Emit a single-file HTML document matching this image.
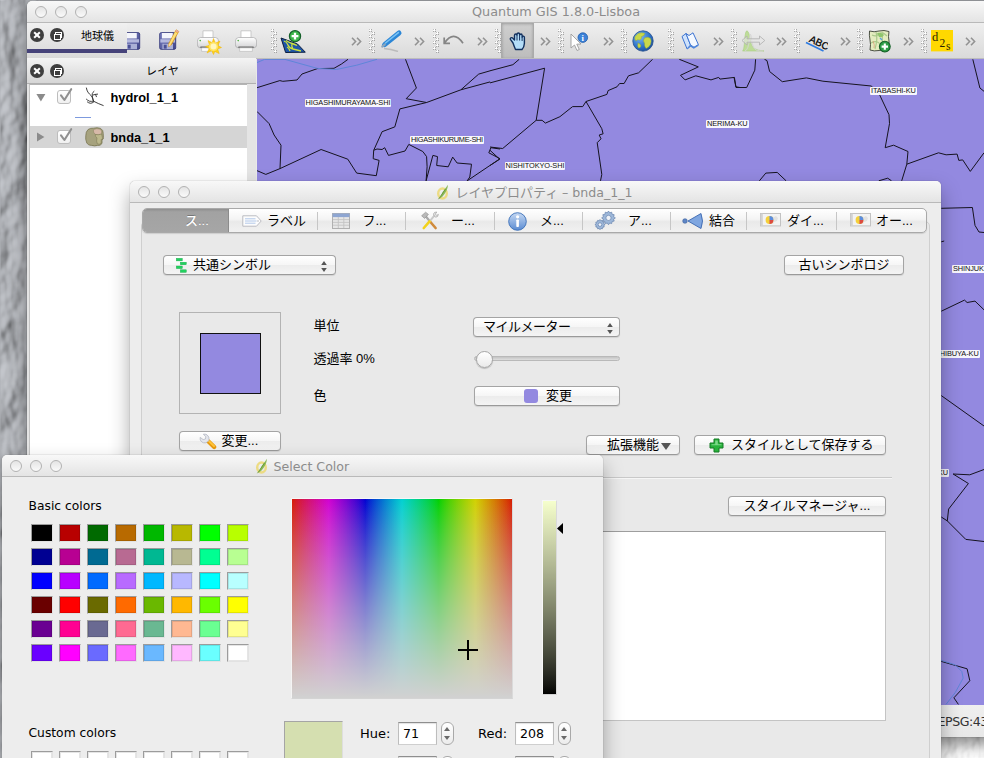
<!DOCTYPE html>
<html lang="ja">
<head>
<meta charset="utf-8">
<title>Quantum GIS 1.8.0-Lisboa</title>
<style>
*{box-sizing:border-box;margin:0;padding:0}
html,body{width:984px;height:758px;overflow:hidden}
body{background:#8e9195;font-family:"Liberation Sans","Noto Sans CJK JP",sans-serif;font-size:13px;color:#000;position:relative}
.abs{position:absolute}
.lg{font-family:"DejaVu Sans","Liberation Sans","Noto Sans CJK JP",sans-serif;font-size:12.6px}
#desk{position:absolute;left:0;top:0;width:984px;height:758px;background:#a3a6aa}
#main{position:absolute;left:27px;top:1px;width:1058px;height:736px;background:#e9e9e9;border-radius:5px 5px 0 0;box-shadow:0 8px 16px rgba(0,0,0,.45),0 0 1px rgba(0,0,0,.7)}
.titlebar{position:absolute;left:0;top:0;right:0;height:22px;border-radius:5px 5px 0 0;background:linear-gradient(#f8f8f8,#e4e4e4);border-bottom:1px solid #b9b9b9;color:#8c8c8c;text-align:center;line-height:22px;font-size:13px;white-space:nowrap}
.lights{position:absolute;left:8px;top:5px;height:12px;line-height:0}
.lights i{display:inline-block;width:12px;height:12px;border-radius:50%;border:1px solid #b2b2b2;background:linear-gradient(#e4e4e4,#fafafa);margin-right:8px;vertical-align:top}
#toolbar{position:absolute;left:0;top:22px;right:0;height:36px;background:linear-gradient(#efefef,#dadada);border-bottom:1px solid #bdbdbd}
#map{position:absolute;left:230px;top:58px;width:828px;height:646px;background:#9389e0;overflow:hidden}
#status{position:absolute;left:0;top:704px;right:0;height:32px;background:linear-gradient(#efefef,#e8e8e8)}
#layers{position:absolute;left:0;top:57px;width:229px;height:680px;background:#e4e4e4}
#layhead{position:absolute;left:0;top:0;width:229px;height:26px;background:linear-gradient(#f4f4f4,#d6d6d6);border-bottom:1px solid #b0b0b0}
#tree{position:absolute;left:2px;top:26px;width:218px;height:651px;background:#fff;border-left:1px solid #c4c4c4;border-top:1px solid #b4b4b4}
.row{position:absolute;left:0;width:217px;height:22px;font-weight:bold;font-size:12.8px;line-height:22px}
.row.sel{background:#d5d5d5}
.cb{position:absolute;left:27px;top:4px;width:14px;height:14px;border:1px solid #bdbdbd;border-radius:3px;background:linear-gradient(#fff,#f0f0f0)}
.cx{position:absolute;width:14px;height:14px;border-radius:50%;background:#3e3e3e}
.cx.x:before,.cx.x:after{content:"";position:absolute;left:6px;top:3px;width:2px;height:8px;background:#fff;transform:rotate(45deg)}
.cx.x:after{transform:rotate(-45deg)}
.cx.f:before{content:"";position:absolute;left:5px;top:3.5px;width:5px;height:4px;border:1px solid #fff}
.cx.f:after{content:"";position:absolute;left:3.5px;top:5.5px;width:5px;height:4px;border:1px solid #fff;background:#3e3e3e}
.dlgwin{position:absolute;background:#ededed;border-radius:5px 5px 0 0;box-shadow:0 10px 20px rgba(0,0,0,.34),0 0 1px rgba(0,0,0,.5)}
.btn{position:absolute;height:20px;border:1px solid #a4a4a4;border-bottom-color:#9a9a9a;border-radius:4px;background:linear-gradient(#ffffff,#f6f6f6 48%,#ececec 52%,#f4f4f4);text-align:center;line-height:18px;font-size:13px;box-shadow:0 1px 1px rgba(0,0,0,.10);white-space:nowrap}
.lbl{position:absolute;font-size:13px;line-height:16px;white-space:nowrap}
.tab{position:absolute;top:0;height:24px;line-height:23px;font-size:13px;white-space:nowrap}
.sw{position:absolute;display:block;width:22px;height:18px;border:1px solid;border-color:#9c9c9c #e2e2e2 #e2e2e2 #9c9c9c;box-shadow:inset 0 0 0 1px rgba(0,0,0,.10)}
.spin{position:absolute;width:39px;height:23px;background:#fff;border:1px solid;border-color:#8e8e8e #bdbdbd #cfcfcf #bdbdbd;line-height:22px;padding-left:4px;box-shadow:inset 0 1px 1px rgba(0,0,0,.12)}
.step{position:absolute;width:13px;height:23px;border:1px solid #a9a9a9;border-radius:6px;background:linear-gradient(#fff,#ececec)}
.step:before,.step:after{content:"";position:absolute;left:2.5px;border:3px solid transparent}
.step:before{top:4px;border-bottom:4.5px solid #6a6a6a;border-top:0}
.step:after{bottom:4px;border-top:4.5px solid #6a6a6a;border-bottom:0}
.chev{position:absolute;top:9px;font-size:15px;line-height:16px;color:#8a8a8a;font-family:"DejaVu Sans",sans-serif;letter-spacing:-2px}
.grip{position:absolute;top:6px;width:7px;height:24px;background:radial-gradient(circle at 1.4px 1.4px,#fff 0 .9px,rgba(125,125,125,.7) 1.5px,transparent 2.1px) 0 0/7px 6px,radial-gradient(circle at 1.4px 1.4px,#fff 0 .9px,rgba(125,125,125,.7) 1.5px,transparent 2.1px) 3px 3px/7px 6px}
.maplbl{position:absolute;font-size:7.4px;line-height:8px;height:8px;background:rgba(255,255,255,.92);color:#111;white-space:nowrap;letter-spacing:-.1px;padding:0 1px;border-radius:1px}
</style>
</head>
<body>
<div id="desk"><svg width="984" height="758" viewBox="0 0 984 758"><filter id="stone" x="0" y="0" width="100%" height="100%"><feTurbulence type="fractalNoise" baseFrequency="0.04 0.028" numOctaves="3" seed="7" result="n"/><feDiffuseLighting in="n" lighting-color="#b9bcc1" surfaceScale="5" diffuseConstant="1.15"><feDistantLight azimuth="200" elevation="48"/></feDiffuseLighting></filter><rect x="0" y="0" width="40" height="758" filter="url(#stone)"/><filter id="stone2" x="0" y="0" width="100%" height="100%"><feTurbulence type="fractalNoise" baseFrequency="0.05 0.04" numOctaves="3" seed="11" result="n"/><feDiffuseLighting in="n" lighting-color="#f4f4f4" surfaceScale="2.5" diffuseConstant="1.3"><feDistantLight azimuth="200" elevation="55"/></feDiffuseLighting></filter><rect x="930" y="700" width="54" height="58" filter="url(#stone2)"/></svg></div>
<div id="main">
  <div class="titlebar"><span class="lights"><i></i><i></i><i></i></span><span class="abs lg" style="left:445px;top:0;line-height:22px;font-size:12.8px">Quantum GIS 1.8.0-Lisboa</span></div>
  <div id="toolbar">
    <div class="abs" style="left:473.5px;top:0;width:33px;height:35px;background:linear-gradient(#cfcfcf,#bdbdbd);border-left:1px solid #aaa;border-right:1px solid #aaa;box-shadow:inset 0 1px 3px rgba(0,0,0,.25)"></div>
    <svg class="abs" style="left:96.4px;top:9.2px" width="17.4" height="18" viewBox="0 0 15.4 18.4" preserveAspectRatio="none"><defs><linearGradient id="fg" x1="0" y1="0" x2="1" y2="1"><stop offset="0" stop-color="#7d83c4"/><stop offset="1" stop-color="#3f4489"/></linearGradient></defs><rect x=".6" y=".6" width="14.2" height="17.2" rx="1.6" fill="url(#fg)" stroke="#35397a" stroke-width=".8"/><rect x="2.6" y="1" width="9.6" height="5.6" fill="#f4f5fb"/><rect x="1.2" y="7.4" width="13" height="3.4" fill="#c3c8e8" opacity=".85"/><rect x="3" y="12" width="9.4" height="5.6" fill="#aab0d6"/><rect x="4.2" y="13" width="2.6" height="4" fill="#4a4f95"/></svg>
    <svg class="abs" style="left:132.3px;top:9.2px" width="17.4" height="18" viewBox="0 0 15.4 18.4" preserveAspectRatio="none"><defs><linearGradient id="fg2" x1="0" y1="0" x2="1" y2="1"><stop offset="0" stop-color="#7d83c4"/><stop offset="1" stop-color="#3f4489"/></linearGradient></defs><rect x=".6" y=".6" width="14.2" height="17.2" rx="1.6" fill="url(#fg2)" stroke="#35397a" stroke-width=".8"/><rect x="2.6" y="1" width="9.6" height="5.6" fill="#f4f5fb"/><rect x="1.2" y="7.4" width="13" height="3.4" fill="#c3c8e8" opacity=".85"/><rect x="3" y="12" width="9.4" height="5.6" fill="#aab0d6"/><rect x="4.2" y="13" width="2.6" height="4" fill="#4a4f95"/></svg>
    <svg class="abs" style="left:138.5px;top:6px" width="14" height="20" viewBox="0 0 14 20"><path d="M10.2 .8 L12.8 2.4 L5.2 16 L2.6 17.6 L2.8 14.4 Z" fill="#f6b92c" stroke="#c98a12" stroke-width=".6"/><path d="M9 2.9 L11.2 4.2 L4.6 15.6 L3.2 14.9Z" fill="#fbe07a"/><path d="M2.8 14.4 L5.2 16 L2.6 17.6Z" fill="#f3d9b0"/><path d="M10.2 .8 L12.8 2.4 L12 3.8 L9.4 2.2Z" fill="#e8a8a0"/></svg>
    <svg class="abs" style="left:170px;top:7px" width="22" height="22" viewBox="0 0 22 22"><defs><linearGradient id="pg" x1="0" y1="0" x2="0" y2="1"><stop offset="0" stop-color="#ffffff"/><stop offset="1" stop-color="#d4d4d6"/></linearGradient></defs><path d="M6 .8 H16 V8 H6Z" fill="#fff" stroke="#b9b9b9" stroke-width=".7"/><path d="M3.5 7.5 H18.5 Q21.4 7.8 21.6 11 V15 Q21.4 17.6 19 17.8 H3 Q.6 17.6 .4 15 V11 Q.6 7.8 3.5 7.5Z" fill="url(#pg)" stroke="#a9a9ab" stroke-width=".7"/><rect x="3.4" y="16.6" width="15.2" height="1.2" fill="#4c4c4c"/><path d="M4.6 17.8 H17.4 V21.4 H4.6Z" fill="#fbfbfb" stroke="#b5b5b5" stroke-width=".6"/><circle cx="3.2" cy="10.6" r=".8" fill="#4cae3e"/></svg>
    <svg class="abs" style="left:177.5px;top:14.5px" width="17" height="17" viewBox="0 0 17 17"><path d="M8.5 .5 L10.4 5.2 L15 3 L12.8 7.6 L16.5 9.5 L12.6 11 L14.2 15.6 L9.8 13.4 L8.5 16.5 L6.6 12.6 L2 15 L4.2 10.6 L.5 8.5 L4.6 7.2 L3 2.6 L7.2 4.8Z" fill="#ffd21a" stroke="#f0b400" stroke-width=".5"/><circle cx="8.5" cy="8.5" r="3" fill="#fffbe0"/><circle cx="8.5" cy="8.5" r="4.6" fill="#fff3a0" opacity=".55"/></svg>
    <svg class="abs" style="left:208.4px;top:7px" width="22" height="22" viewBox="0 0 22 22"><defs><linearGradient id="pg2" x1="0" y1="0" x2="0" y2="1"><stop offset="0" stop-color="#ffffff"/><stop offset="1" stop-color="#d4d4d6"/></linearGradient></defs><path d="M6 .8 H16 V8 H6Z" fill="#fff" stroke="#b9b9b9" stroke-width=".7"/><path d="M3.5 7.5 H18.5 Q21.4 7.8 21.6 11 V15 Q21.4 17.6 19 17.8 H3 Q.6 17.6 .4 15 V11 Q.6 7.8 3.5 7.5Z" fill="url(#pg2)" stroke="#a9a9ab" stroke-width=".7"/><rect x="3.4" y="16.6" width="15.2" height="1.2" fill="#4c4c4c"/><path d="M4.6 17.8 H17.4 V21.4 H4.6Z" fill="#fbfbfb" stroke="#b5b5b5" stroke-width=".6"/><circle cx="3.2" cy="10.6" r=".8" fill="#4cae3e"/></svg>
    <i class="grip" style="left:244px"></i>
    <svg class="abs" style="left:253px;top:6px" width="27" height="25" viewBox="0 0 27 25"><path d="M1 9 L17.5 15 L25.3 23.2 L5.6 23.5Z" fill="#1f56a8" stroke="#0d1f3f" stroke-width="1"/><path d="M4 12 Q7 13 8 16 T13 20 T21 22 M6 11.5 Q10 14 12 14.5 T17 16.5 M7 18 Q9 19 10 22 M12 14.5 Q11 17 13 20" fill="none" stroke="#cfe23a" stroke-width="1.3"/><circle cx="15" cy="7.2" r="5.6" fill="#3cb54a" stroke="#15602a" stroke-width="1.2"/><path d="M15 3.8 V10.6 M11.6 7.2 H18.4" stroke="#fff" stroke-width="2.3"/></svg>
    <svg class="abs" style="left:324px;top:14px" width="11" height="9" viewBox="0 0 11 9"><path d="M1 .8 L4.6 4.5 L1 8.2 M6 .8 L9.6 4.5 L6 8.2" fill="none" stroke="#939393" stroke-width="1.6"/></svg>
    <i class="grip" style="left:342px"></i>
    <svg class="abs" style="left:353px;top:6px" width="23" height="23" viewBox="0 0 23 23"><path d="M4 19.5 Q11 20 18 22.5" stroke="rgba(0,0,0,.16)" stroke-width="1.5" fill="none"/><path d="M4.6 15.6 L19 4" stroke="#2b86d6" stroke-width="5" stroke-linecap="round"/><path d="M5.5 14 L18.4 3.6" stroke="#79c2f4" stroke-width="1.6" stroke-linecap="round"/><path d="M2.4 17.4 L4.6 15.6" stroke="#8aa5bd" stroke-width="2.4" stroke-linecap="round"/></svg>
    <svg class="abs" style="left:386.5px;top:14px" width="11" height="9" viewBox="0 0 11 9"><path d="M1 .8 L4.6 4.5 L1 8.2 M6 .8 L9.6 4.5 L6 8.2" fill="none" stroke="#939393" stroke-width="1.6"/></svg>
    <i class="grip" style="left:405.5px"></i>
    <svg class="abs" style="left:415px;top:10px" width="23" height="13" viewBox="0 0 23 13"><path d="M2.4 10.2 Q11.5 -3.5 21 10.2" fill="none" stroke="#858585" stroke-width="1.7"/><path d="M2.2 4.6 V10.4 H8" fill="none" stroke="#858585" stroke-width="1.7"/></svg>
    <svg class="abs" style="left:450px;top:14px" width="11" height="9" viewBox="0 0 11 9"><path d="M1 .8 L4.6 4.5 L1 8.2 M6 .8 L9.6 4.5 L6 8.2" fill="none" stroke="#939393" stroke-width="1.6"/></svg>
    <i class="grip" style="left:467.5px"></i>
    <svg class="abs" style="left:481px;top:9px" width="19" height="19" viewBox="0 0 19 19"><path d="M5 11 L3 8.2 Q1.6 7 2.8 5.9 Q4 5.2 5 6.4 L6.5 8 V3.4 Q6.6 2 7.8 2 Q9 2 9 3.4 V2.4 Q9.2 1 10.4 1 Q11.6 1 11.6 2.4 V3.2 Q11.8 2 13 2 Q14.1 2.1 14.1 3.4 V5 Q14.4 4 15.4 4.1 Q16.5 4.3 16.4 5.6 V11.5 Q16.2 15 14 17.5 H7.5 Q6 14 5 11Z" fill="#b4ddf8" stroke="#12305e" stroke-width="1.4" stroke-linejoin="round"/><path d="M9 4 V8.5 M11.6 3.6 V8.5 M14.1 5 V9" stroke="#12305e" stroke-width="1"/></svg>
    <svg class="abs" style="left:513px;top:14px" width="11" height="9" viewBox="0 0 11 9"><path d="M1 .8 L4.6 4.5 L1 8.2 M6 .8 L9.6 4.5 L6 8.2" fill="none" stroke="#939393" stroke-width="1.6"/></svg>
    <i class="grip" style="left:530.5px"></i>
    <svg class="abs" style="left:542px;top:8px" width="20" height="21" viewBox="0 0 20 21"><path d="M2 3 L2 17 L5.5 14 L8 19.5 L10.3 18.5 L7.8 13.2 L12 13Z" fill="#fff" stroke="#9c9c9c" stroke-width=".9"/><circle cx="13.8" cy="6.6" r="4.8" fill="#3c82d8" stroke="#1f5cab" stroke-width=".8"/><text x="13.8" y="9.6" font-family="Liberation Serif,serif" font-weight="bold" font-size="8.5" text-anchor="middle" fill="#fff">i</text></svg>
    <svg class="abs" style="left:576px;top:14px" width="11" height="9" viewBox="0 0 11 9"><path d="M1 .8 L4.6 4.5 L1 8.2 M6 .8 L9.6 4.5 L6 8.2" fill="none" stroke="#939393" stroke-width="1.6"/></svg>
    <i class="grip" style="left:593.5px"></i>
    <svg class="abs" style="left:605px;top:7px" width="22" height="22" viewBox="0 0 22 22"><defs><radialGradient id="gl" cx=".35" cy=".3" r=".8"><stop offset="0" stop-color="#7fb9f2"/><stop offset=".6" stop-color="#2f73c9"/><stop offset="1" stop-color="#1b4a94"/></radialGradient></defs><circle cx="11" cy="11" r="10.2" fill="url(#gl)" stroke="#244f8d" stroke-width=".8"/><path d="M6 3.5 Q10 2 13 3.5 Q12 6 9.5 6.5 Q10 9 7.5 10 Q5 9 4 11 Q2 9 3 6.5Z M12.5 8 Q16 6.5 18.5 8.5 Q20 11 18.5 14.5 Q16.5 18 14 18.5 Q12 16 12.5 13 Q10.5 11 12.5 8Z M6 13 Q8.5 13.5 9 16 Q8 18.5 6.5 18 Q5 16 6 13Z" fill="#c9d84b" stroke="#8fa52c" stroke-width=".4"/></svg>
    <i class="grip" style="left:640.5px"></i>
    <svg class="abs" style="left:654px;top:9px" width="19" height="18" viewBox="0 0 19 18"><path d="M1 4.5 L5 1.5 L9.5 13 L6 16.8Z" fill="#cfe2fb" stroke="#3d74d2" stroke-width="1"/><path d="M5 1.5 L8 3.5 L12 .8 L17.4 12.6 L13 15.2 L9.5 13Z" fill="#f3f8ff" stroke="#3d74d2" stroke-width="1"/><path d="M6 16.8 L9.5 13 L13 15.2 L17.4 12.6 L17.6 13.8 L12.8 16.8 L9.6 14.8 L6.4 17.6Z" fill="#4a84dd"/></svg>
    <svg class="abs" style="left:685.5px;top:14px" width="11" height="9" viewBox="0 0 11 9"><path d="M1 .8 L4.6 4.5 L1 8.2 M6 .8 L9.6 4.5 L6 8.2" fill="none" stroke="#939393" stroke-width="1.6"/></svg>
    <i class="grip" style="left:704px"></i>
    <svg class="abs" style="left:714px;top:7px" width="25" height="22" viewBox="0 0 25 22"><path d="M1.5 21 Q3 21 3.6 10 Q4.4 .5 6 .8 Q8 1.5 9 9 Q10 16 13 18.5 Q17 20.6 23 21Z" fill="#bcdc94" stroke="#a5cc7c" stroke-width=".6" opacity=".95"/><path d="M4 21 Q7.5 20 8.6 8 Q9.4 .5 10.4 8 Q11.4 18 15 20 Q18 21 22 21" fill="none" stroke="#d4d4d4" stroke-width=".9"/><path d="M1 10.5 L6 6 V8.8 H18.5 V6 L23.8 10.5 L18.5 15 V12.2 H6 V15Z" fill="#e6e6e6" fill-opacity=".6" stroke="#b4b4b4" stroke-width=".9"/></svg>
    <svg class="abs" style="left:749px;top:14px" width="11" height="9" viewBox="0 0 11 9"><path d="M1 .8 L4.6 4.5 L1 8.2 M6 .8 L9.6 4.5 L6 8.2" fill="none" stroke="#939393" stroke-width="1.6"/></svg>
    <i class="grip" style="left:766.5px"></i>
    <svg class="abs" style="left:778px;top:10px" width="23" height="19" viewBox="0 0 23 19"><text x="3.5" y="8.5" font-family="Liberation Sans,sans-serif" font-size="10" fill="#000" stroke="#000" stroke-width=".25" transform="rotate(25 3.5 8.5)">ABC</text><path d="M1 9.5 L18.5 18" stroke="#2f7be0" stroke-width="1.8"/></svg>
    <svg class="abs" style="left:812.5px;top:14px" width="11" height="9" viewBox="0 0 11 9"><path d="M1 .8 L4.6 4.5 L1 8.2 M6 .8 L9.6 4.5 L6 8.2" fill="none" stroke="#939393" stroke-width="1.6"/></svg>
    <i class="grip" style="left:830px"></i>
    <svg class="abs" style="left:841px;top:6px" width="24" height="25" viewBox="0 0 24 25"><path d="M1.5 2 Q6 3.5 11 2 Q16 .8 21 2.5 Q20 8 21 12 Q21.5 17 20.5 21 Q15 20 11 21.5 Q6 22.5 2 21 Q3 15 2 11 Q1 6 1.5 2Z" fill="#e4ecc0" stroke="#3a3f33" stroke-width=".9"/><path d="M4 6 Q8 8 11 5 T19 7 M3 14 Q9 11 12 15 T20 13 M8 3 Q10 10 7 20 M15 3 Q13 11 16 19" fill="none" stroke="#a9c98a" stroke-width="1.2"/><path d="M9 4 Q13 3 16 6 Q14 9 11 8Z" fill="#8fc46c"/><path d="M12 9 L14 11" stroke="#5aa0e0" stroke-width="1.2"/><path d="M5 12 Q7 16 6 19" stroke="#d9a07a" stroke-width=".8" fill="none"/><circle cx="16.8" cy="17.6" r="5.4" fill="#2f9d46" stroke="#155f27" stroke-width="1.1"/><path d="M16.8 14.4 V20.8 M13.6 17.6 H20" stroke="#fff" stroke-width="2.1"/></svg>
    <svg class="abs" style="left:875.5px;top:14px" width="11" height="9" viewBox="0 0 11 9"><path d="M1 .8 L4.6 4.5 L1 8.2 M6 .8 L9.6 4.5 L6 8.2" fill="none" stroke="#939393" stroke-width="1.6"/></svg>
    <i class="grip" style="left:893.5px"></i>
    <svg class="abs" style="left:903.8px;top:7.2px" width="22.2" height="21.4" viewBox="0 0 22.2 21.4"><rect width="22.2" height="21.4" fill="#ffd800"/><g font-family="Liberation Serif,serif" fill="#2a1e00"><text x=".9" y="11.2" font-size="12.5">d</text><text x="8.6" y="16.8" font-size="11.5">2</text><text x="15" y="20.4" font-size="11.5">s</text></g></svg>
    <svg class="abs" style="left:937.5px;top:14px" width="11" height="9" viewBox="0 0 11 9"><path d="M1 .8 L4.6 4.5 L1 8.2 M6 .8 L9.6 4.5 L6 8.2" fill="none" stroke="#939393" stroke-width="1.6"/></svg>
    <div class="abs" style="left:0;top:0;width:100px;height:30px;background:linear-gradient(#f1f1f1,#dcdcdc)"><span class="cx x" style="left:3px;top:5px"></span><span class="cx f" style="left:23px;top:5px"></span><span class="abs" style="left:54px;top:6px;font-size:11px;line-height:14px">地球儀</span><div class="abs" style="left:0;top:26px;width:100px;height:4px;background:#46437a"></div></div>
  </div>
  <div id="layers">
    <div id="layhead">
      <span class="cx x" style="left:3px;top:6px"></span><span class="cx f" style="left:23px;top:6px"></span>
      <span class="abs" style="left:119px;top:6px;font-size:11px;line-height:14px">レイヤ</span>
    </div>
    <div id="tree">
      <div class="row" style="top:1px"><svg class="abs" style="left:6px;top:8px" width="10" height="8" viewBox="0 0 10 8"><path d="M.4 0 H9.4 L4.9 7.4Z" fill="#8b8b8b"/></svg><span class="cb"></span><svg class="abs" style="left:28px;top:1px" width="16" height="18" viewBox="0 0 16 18"><path d="M3 8.4 L6.4 13 L13.2 2.2" fill="none" stroke="#909090" stroke-width="2.1" stroke-linecap="round" stroke-linejoin="round"/></svg><svg class="abs" style="left:54.5px;top:1px" width="20" height="20" viewBox="0 0 20 20"><path d="M1.4 1 Q1.8 3.4 2.9 5.1 Q4.6 7.4 6.5 9.1 Q8.2 11.4 8.5 14.2 Q13 16.6 18.2 18.5 M8.5 14.2 Q7.4 12 7.5 10.2 Q6.9 8.2 7.3 6.6 Q7.8 5.2 9 4.3 M7.7 8.1 Q10.2 7.2 12.6 7.1 M10.6 7.6 L11.4 9.7 M8.5 14.2 Q6.4 14.6 4.5 14.2 Q2.6 13.4 1.4 12.2 M8.5 15.2 Q7 16.2 5.5 16.3 Q3.6 16 2.4 15" fill="none" stroke="#2a2a2a" stroke-width=".9" stroke-linecap="round"/></svg><span class="abs" style="left:80.5px;top:1px">hydrol_1_1</span></div>
      <div class="abs" style="left:45px;top:32px;width:16px;height:1px;background:#7d9ade"></div>
      <div class="row sel" style="top:41px"><svg class="abs" style="left:7px;top:6px" width="8" height="10" viewBox="0 0 8 10"><path d="M0 .4 V9.6 L7.4 5Z" fill="#8b8b8b"/></svg><span class="cb"></span><svg class="abs" style="left:28px;top:1px" width="16" height="18" viewBox="0 0 16 18"><path d="M3 8.4 L6.4 13 L13.2 2.2" fill="none" stroke="#909090" stroke-width="2.1" stroke-linecap="round" stroke-linejoin="round"/></svg><svg class="abs" style="left:54.5px;top:1px" width="20" height="20" viewBox="0 0 20 20"><path d="M3 2.6 Q5.6 .8 8.6 1.2 Q12 .2 15.6 1.4 Q18.4 3 18.2 6.4 L18.4 10.6 Q18.6 12.4 17 12.8 L17 16.4 Q15.4 19 12.6 18.4 Q9.6 19.4 6.6 18.4 Q3.2 18.6 1.8 16 Q.2 12.4 .8 8.6 Q.8 4.8 3 2.6Z" fill="#a6a27e" stroke="#77734f" stroke-width=".8"/><path d="M8.4 2.6 Q11.6 1 15.4 2.2 Q17.4 4 16.6 7 Q13 8.4 10.2 7.4 Q8 5.6 8.4 2.6Z" fill="#d6b9a8" stroke="#8a8260" stroke-width=".5"/><path d="M10.2 7.4 Q13 8.4 16.6 7 L17.6 11.6 Q16.8 12.4 16.2 12.4 L16.2 16 Q14.6 17.8 12.4 17 Q11 14 12 11 Q10 9.4 10.2 7.4Z" fill="#bcb88c" stroke="#77734f" stroke-width=".5"/></svg><span class="abs" style="left:80.5px;top:1px">bnda_1_1</span></div>
    </div>
  </div>
  <div id="map">
    <svg class="abs" style="left:0;top:0" width="829" height="647" viewBox="0 0 829 647"><path fill="none" stroke="#15131f" stroke-width="1" stroke-linejoin="round" d="M148.5 0.3 L159.4 29 L149.2 39.7 L169.6 43.5 L203.9 30.8 L233.1 22.9 M203.9 30.8 L221.7 15.1 L233.1 11.8 M169.6 43.5 L142.9 49.9 L137.8 67.9 L125.1 72.7 L116.7 91.3 L116.2 99.7 L122.1 101.4 L119.3 116.7 L99.7 114.1 L90.8 100.2 L64.1 90.5 L23 109.6 L8.8 115.4 L-0.1 111.6 M-0.1 52.4 L12.1 64.6 L17.1 76 L24 86.2 L23 109.6 M116.7 91.3 L120 90 L125.1 90.5 L127.7 88.7 L131.5 96.4 L148 92 L151.8 85.4 L165.8 92.5 L169.6 97.6 L170.1 107.8 L169.1 121.8 M169.1 121.8 L175.9 96.4 L180.5 97.6 L179.7 106.5 L191.2 107.8 L195.7 98.1 L200.1 104 L214.5 105.2 L212.8 118 L210.2 121.8 M210.2 121.8 L243 99.7 M243 99.7 L231.8 93.8 L233.9 88.7 L243 90 M0 28.7 L22.8 21.6 L25.8 22.3 L40 21 L45 15 L60.4 9.6 L77 9.3 L84.5 5 L91 0.3 M233 11.8 L255.9 5.7 L262.2 0.3 M233 23.9 L287.6 9.2 L279.2 61.3 L245.7 89.5 L233 88 M233 91.3 L242.7 100.2 L233 106.5 M279.2 61.3 L285.1 61.3 L288.4 64.1 L302.9 57.7 L315.6 47.6 L325.7 47.6 L329 42.5 L349.9 35.4 L351.1 31.6 L360 27.8 L362.6 24.5 L367.1 24.5 L371.5 16.8 L381.6 13.8 L395.6 0.3 M329 42.5 L344.8 69.7 L346.1 74.8 L342.2 76 L344 79.8 L340.2 83.7 L344.8 115.4 L343.5 121.8 M422.3 0.3 L441.3 7.9 L423.5 16.3 L428.1 20.9 L438.8 16.8 L454 20.9 L461.7 18.4 L462.9 20.1 L477.4 18.4 L478.9 27.8 L483 28.5 M477 18.4 L479 28.5 L489.7 28.5 L497.8 11.2 L498.6 0.3 M507.5 0.3 L510 1.6 L512.6 12.5 L525.3 22.7 L549.4 18.9 L565.9 22.2 L614.2 27 L621.8 34.1 L632 55.7 L632.5 64.6 L628.2 88.7 L636.6 86.2 L651 92.5 L649.8 105.2 L681.5 93.8 L689.1 95.8 L700.1 95.1 L701.8 101.4 L705.7 100.9 L713.3 112.4 L727 93.8 M649.8 105.2 L644.7 121.8 M715.8 0.3 L722.9 29 L727 32.3 M502.4 121.8 L508.8 114.1 L520.2 113.4 L529.1 121.8 M621.8 121.8 L630.7 119.2 L634.5 121.8 M684.3 149.3 L715.4 148.5 L718 166.4 L722 173 L727 173.5 M684.3 182.8 L687.2 182 M684.3 252.2 L707.5 241.1 L710.1 243.5 L718 242.1 L727 250.8 M684.3 336.6 L727 367 M727 410.5 L712.8 415.8 L696.1 415 L711.4 424.5 L691.6 450.1 L690.3 461.9 M684.3 458 L690.3 461.9 L708.8 480.4 L727 482.5 M684.3 602.4 L710.1 609.8 L712.8 621.7 L696.9 638.8 L701.4 645.4"/>
<path fill="none" stroke="#5f86d8" stroke-width="1" d="M0 3.6 L7.5 0.4 L28 0.4 L60.4 9.4 L79.4 10.5 L99.7 6.2 L120 0.3 M684.3 601.4 L698.2 605.9 L704.8 612.5 L706.2 619.1 L698.2 633.6 L689 645.4"/></svg>
    <span class="maplbl" style="left:47.5px;top:39.5px;">HIGASHIMURAYAMA-SHI</span>
    <span class="maplbl" style="left:153px;top:77px;"><span style="letter-spacing:-.32px">HIGASHIKURUME-SHI</span></span>
    <span class="maplbl" style="left:247.5px;top:103px;">NISHITOKYO-SHI</span>
    <span class="maplbl" style="left:449px;top:61px;">NERIMA-KU</span>
    <span class="maplbl" style="left:613px;top:27.5px;">ITABASHI-KU</span>
    <span class="maplbl" style="left:695px;top:206px;">SHINJUKU-KU</span>
    <span class="maplbl" style="left:677px;top:290.5px;">SHIBUYA-KU</span>
    <span class="maplbl" style="left:645px;top:410px;">MEGURO-KU</span>
  </div>
  <div id="status"><span class="abs lg" style="left:910.5px;top:8.5px;color:#333;letter-spacing:-.45px">EPSG:4326</span></div>
</div>
<div id="dlg" class="dlgwin" style="left:130px;top:181px;width:811px;height:600px">
  <div class="titlebar" style="line-height:23px"><span class="lights"><i></i><i></i><i></i></span><svg class="abs" style="left:306px;top:3px" width="14" height="16" viewBox="0 0 14 16"><ellipse cx="6.5" cy="9.5" rx="4.3" ry="5" fill="none" stroke="#ecd978" stroke-width="2.4" opacity=".9"/><path d="M3.2 15 Q6 8 12 .8 Q11.5 7 6.5 12.5Z" fill="#7fb24a" opacity=".9"/><path d="M2.5 15.2 L9.5 5" stroke="#5f9433" stroke-width=".8"/></svg><span class="abs" style="left:325.5px;top:0">レイヤプロパティ <span class="lg">– bnda_1_1</span></span></div>
  <div class="abs" style="left:11px;top:40px;width:789px;height:600px;background:#e9e9e9;border:1px solid #cfcfcf;border-radius:5px"></div>
  <div class="abs" style="left:12px;top:27px;width:785px;height:25px;border:1px solid #a9a9a9;border-radius:5px;background:linear-gradient(#ffffff,#f4f4f4 45%,#e9e9e9 55%,#f1f1f1);box-shadow:0 1px 1px rgba(0,0,0,.12);overflow:hidden">
   <div class="tab" style="left:-1px;width:87px;background:linear-gradient(#8f8f8f,#a2a2a2 12%,#a6a6a6);color:#fff;box-shadow:inset 1px 0 0 #858585,inset -1px 0 0 #8c8c8c;font-weight:500;"><span class="abs" style="left:43px;top:0;text-shadow:0 -1px 0 rgba(0,0,0,.3)">ス...</span></div>
   <div class="tab" style="left:86px;width:89px;"><svg class="abs" style="left:13px;top:5px" width="20" height="14" viewBox="0 0 20 14"><path d="M.8 1.8 H14.5 L19.2 7 L14.5 12.2 H.8Z" fill="#fcfcfd" stroke="#b4b6bc" stroke-width=".9"/><path d="M3 4.8 H13.5 M3 7 H14.5 M3 9.2 H13.5" stroke="#a9c2e6" stroke-width=".9"/><circle cx="16" cy="7" r=".8" fill="#b4b6bc"/></svg><span class="abs" style="left:38px;top:0;">ラベル</span></div>
   <div class="tab" style="left:175px;width:88px;"><i class="abs" style="left:-1px;top:3px;width:1px;height:18px;background:#c6c6c6"></i><svg class="abs" style="left:14px;top:3.5px" width="18" height="16" viewBox="0 0 18 16"><rect x=".5" y=".5" width="17" height="15" fill="#e6e6e6" stroke="#b0b0b0"/><rect x=".5" y=".5" width="17" height="3.6" fill="#8ea6d2"/><path d="M1 6.6 H17 M1 9.4 H17 M1 12.2 H17 M6.3 4 V15 M11.8 4 V15" stroke="#c4c4c4" stroke-width=".9"/></svg><span class="abs" style="left:44.5px;top:0;">フ...</span></div>
   <div class="tab" style="left:263px;width:89px;"><i class="abs" style="left:-1px;top:3px;width:1px;height:18px;background:#c6c6c6"></i><svg class="abs" style="left:14px;top:2px" width="19" height="19" viewBox="0 0 19 19"><path d="M5.5 5 L10 10.5" stroke="#a9a9a9" stroke-width="2.2" stroke-linecap="round"/><path d="M10 10.5 L15.6 17" stroke="#cf8a3c" stroke-width="2.6" stroke-linecap="round"/><path d="M1.6 4.8 L5.6 1.2 L8.4 3.4 L4.6 7.4Z" fill="#b9b9b9" stroke="#8a8a8a" stroke-width=".6"/><path d="M14.6 4.4 L9.6 10.4" stroke="#c9c9c9" stroke-width="2" stroke-linecap="round"/><path d="M9.6 10.4 L3.8 17" stroke="#f2d21c" stroke-width="2.6" stroke-linecap="round"/><path d="M13.4 3 Q14 .8 16.8 1 L15.4 3 L16.6 4.4 L18.4 3.4 Q18.2 6 15.8 6.2 Q14 5.6 13.4 3Z" fill="#e2e2e2" stroke="#9a9a9a" stroke-width=".6"/></svg><span class="abs" style="left:45px;top:0;">ー...</span></div>
   <div class="tab" style="left:352px;width:87.5px;"><i class="abs" style="left:-1px;top:3px;width:1px;height:18px;background:#c6c6c6"></i><svg class="abs" style="left:13px;top:2.5px" width="19" height="19" viewBox="0 0 19 19"><defs><linearGradient id="ig" x1="0" y1="0" x2="0" y2="1"><stop offset="0" stop-color="#c6d9f3"/><stop offset="1" stop-color="#5a8bd2"/></linearGradient></defs><circle cx="9.5" cy="9.5" r="8.8" fill="url(#ig)" stroke="#3b6fb8" stroke-width=".9"/><rect x="8.3" y="7.5" width="2.6" height="7.5" rx=".8" fill="#fff"/><circle cx="9.6" cy="4.8" r="1.6" fill="#fff"/></svg><span class="abs" style="left:45px;top:0;">メ...</span></div>
   <div class="tab" style="left:439.5px;width:88.5px;"><i class="abs" style="left:-1px;top:3px;width:1px;height:18px;background:#c6c6c6"></i><svg class="abs" style="left:11.5px;top:1px" width="23" height="21" viewBox="0 0 23 21"><g fill="#9db7d9" stroke="#6582ad" stroke-width=".7"><path d="M14.5 1 l1.2 1.8 2-.6 .4 2.1 2.1.4 -.6 2 1.8 1.2 -1.8 1.2 .6 2 -2.1.4 -.4 2.1 -2-.6 -1.2 1.8 -1.2-1.8 -2 .6 -.4-2.1 -2.1-.4 .6-2 -1.8-1.2 1.8-1.2 -.6-2 2.1-.4 .4-2.1 2 .6Z"/><circle cx="14.5" cy="7.9" r="2.6" fill="#eef2f8"/><path d="M6 9.5 l.9 1.3 1.5-.4 .3 1.5 1.5.3 -.4 1.5 1.3.9 -1.3.9 .4 1.5 -1.5.3 -.3 1.5 -1.5-.4 -.9 1.3 -.9-1.3 -1.5.4 -.3-1.5 -1.5-.3 .4-1.5 -1.3-.9 1.3-.9 -.4-1.5 1.5-.3 .3-1.5 1.5.4Z"/><circle cx="6" cy="14.6" r="1.8" fill="#eef2f8"/></g></svg><span class="abs" style="left:45.5px;top:0;">ア...</span></div>
   <div class="tab" style="left:528px;width:75.5px;"><i class="abs" style="left:-1px;top:3px;width:1px;height:18px;background:#c6c6c6"></i><svg class="abs" style="left:11px;top:3px" width="23" height="18" viewBox="0 0 23 18"><circle cx="3" cy="9" r="2.3" fill="#5f86c6" stroke="#3b5f9c" stroke-width=".6"/><path d="M6 9 L19 1.5 Q22 9 19 16.5Z" fill="#7fa6e0" stroke="#3b68b0" stroke-width=".9"/></svg><span class="abs" style="left:38px;top:0;">結合</span></div>
   <div class="tab" style="left:603.5px;width:90px;"><i class="abs" style="left:-1px;top:3px;width:1px;height:18px;background:#c6c6c6"></i><svg class="abs" style="left:13.5px;top:3.8px" width="21" height="14" viewBox="0 0 21 14"><rect x=".5" y=".5" width="20" height="12.4" fill="#f3f3f3" stroke="#c2c2c2"/><rect x=".6" y=".6" width="2.2" height="12.2" fill="#d2d2d2"/><path d="M11 3 l3 1 2-1 2 2 -1 3 -3 1 -1 2 -3-1Z" fill="#e2e2e2"/><circle cx="9.5" cy="7" r="3.9" fill="#f4d03a"/><path d="M9.5 7 V3.1 A3.9 3.9 0 0 1 13.4 7Z" fill="#5b8de0"/><path d="M9.5 7 H13.4 A3.9 3.9 0 0 1 9.5 10.9Z" fill="#dc4a42"/></svg><span class="abs" style="left:40.5px;top:0;">ダイ...</span></div>
   <div class="tab" style="left:693.5px;width:90.5px;"><i class="abs" style="left:-1px;top:3px;width:1px;height:18px;background:#c6c6c6"></i><svg class="abs" style="left:13.3px;top:3.8px" width="21" height="14" viewBox="0 0 21 14"><rect x=".5" y=".5" width="20" height="12.4" fill="#f3f3f3" stroke="#c2c2c2"/><rect x=".6" y=".6" width="2.2" height="12.2" fill="#d2d2d2"/><path d="M11 3 l3 1 2-1 2 2 -1 3 -3 1 -1 2 -3-1Z" fill="#e2e2e2"/><circle cx="9.5" cy="7" r="3.9" fill="#f4d03a"/><path d="M9.5 7 V3.1 A3.9 3.9 0 0 1 13.4 7Z" fill="#5b8de0"/><path d="M9.5 7 H13.4 A3.9 3.9 0 0 1 9.5 10.9Z" fill="#dc4a42"/></svg><span class="abs" style="left:39.5px;top:0;">オー...</span></div>
  </div>
  <div class="btn" style="left:33px;top:74px;width:173px;height:20px;line-height:18px;text-align:left;"><svg class="abs" style="left:12px;top:2px" width="11" height="15" viewBox="0 0 11 15"><g fill="#22d15f" stroke="#17a849" stroke-width=".4"><rect x=".3" y=".3" width="6" height="2.6"/><rect x="4.3" y="4.2" width="6" height="2.6"/><rect x=".3" y="8" width="6" height="2.6"/><rect x="4.3" y="11.8" width="6" height="2.6"/></g></svg><span class="abs" style="left:29px;top:0">共通シンボル</span><svg class="abs" style="right:8px;top:5px" width="6" height="11" viewBox="0 0 6 11"><path d="M3 0 L5.8 4 H.2Z M3 11 L5.8 7 H.2Z" fill="#555"/></svg></div>
  <div class="btn" style="left:654px;top:74px;width:120px;height:20px;line-height:18px;">古いシンボロジ</div>
  <div class="abs" style="left:49px;top:131px;width:102px;height:102px;border:1px solid #b3b3b3"></div>
  <div class="abs" style="left:70px;top:152px;width:61px;height:61px;border:1px solid #111;background:#9389e0"></div>
  <span class="lbl" style="left:183.5px;top:136.5px;">単位</span>
  <span class="lbl" style="left:183.5px;top:169.5px;">透過率 0%</span>
  <span class="lbl" style="left:183.5px;top:207px;">色</span>
  <div class="btn" style="left:343px;top:136px;width:147px;height:20px;line-height:18px;text-align:left;"><span class="abs" style="left:9px;top:0;letter-spacing:-.5px">マイルメーター</span><svg class="abs" style="right:6px;top:5px" width="6" height="11" viewBox="0 0 6 11"><path d="M3 0 L5.8 4 H.2Z M3 11 L5.8 7 H.2Z" fill="#555"/></svg></div>
  <div class="abs" style="left:343.5px;top:175px;width:146px;height:5px;border-radius:3px;background:linear-gradient(#c4c4c4,#dedede);border:1px solid #b9b9b9"></div>
  <div class="abs" style="left:345.5px;top:170px;width:17px;height:17px;border-radius:50%;border:1px solid #a6a6a6;background:linear-gradient(#ffffff,#eaeaea);box-shadow:0 1px 1px rgba(0,0,0,.2)"></div>
  <div class="btn" style="left:344px;top:205px;width:146px;height:20px;line-height:18px;"><i class="abs" style="left:49px;top:2px;width:14px;height:14px;border-radius:3px;background:#9389e0"></i><span class="abs" style="left:71px;top:0">変更</span></div>
  <div class="btn" style="left:49px;top:250px;width:102px;height:20px;line-height:18px;"><svg class="abs" style="left:19px;top:1px" width="19" height="18" viewBox="0 0 19 18"><path d="M9 8 L15.2 14" stroke="#e89a10" stroke-width="4.4" stroke-linecap="round"/><path d="M9.4 7.6 L15 13" stroke="#ffc43a" stroke-width="2" stroke-linecap="round"/><path d="M1.2 4.4 Q.6 8.6 4.6 9.8 Q7 10.2 8.6 8.8 L10 7.2 Q10.6 3.6 8 1.8 Q6.2 .8 4.4 1.2 L6.8 3.8 L6.4 6 L4.2 6.6Z" fill="#e4e6ec" stroke="#aeb2bd" stroke-width=".7"/></svg><span class="abs" style="left:41.5px;top:0">変更...</span></div>
  <div class="btn" style="left:456px;top:254px;width:94px;height:20px;line-height:18px;"><span class="abs" style="left:20px;top:0">拡張機能</span><svg class="abs" style="left:74px;top:7px" width="10" height="7" viewBox="0 0 10 7"><path d="M0 0 H10 L5 7Z" fill="#555"/></svg></div>
  <div class="btn" style="left:564px;top:254px;width:192px;height:20px;line-height:18px;"><svg class="abs" style="left:14px;top:2px" width="15" height="15" viewBox="0 0 15 15"><path d="M5 1 H10 V5 H14 V10 H10 V14 H5 V10 H1 V5 H5Z" fill="#28b23c" stroke="#157a25" stroke-width="1" stroke-linejoin="round"/><path d="M6.2 2.5 H8.8 V6.2 H12.5 V7.2 H2.5 V6.2 H6.2Z" fill="#8fe29b" opacity=".8"/></svg><span class="abs" style="left:36px;top:0">スタイルとして保存する</span></div>
  <div class="abs" style="left:33px;top:296px;width:729px;height:2px;border-top:1px solid #c9c9c9;border-bottom:1px solid #f6f6f6"></div>
  <div class="btn" style="left:598px;top:315px;width:158px;height:20px;line-height:18px;">スタイルマネージャ...</div>
  <div class="abs" style="left:33px;top:349.5px;width:722.5px;height:190.5px;background:#fff;border:1px solid;border-color:#9e9e9e #c4c4c4 #c4c4c4 #c4c4c4"></div>
</div>
<div id="cdlg" class="dlgwin" style="left:2px;top:455px;width:601px;height:320px">
  <div class="titlebar" style="line-height:23px"><span class="lights"><i></i><i></i><i></i></span><svg class="abs" style="left:253px;top:3px" width="14" height="16" viewBox="0 0 14 16"><ellipse cx="6.5" cy="9.5" rx="4.3" ry="5" fill="none" stroke="#ecd978" stroke-width="2.4" opacity=".9"/><path d="M3.2 15 Q6 8 12 .8 Q11.5 7 6.5 12.5Z" fill="#7fb24a" opacity=".9"/><path d="M2.5 15.2 L9.5 5" stroke="#5f9433" stroke-width=".8"/></svg><span class="abs lg" style="left:271.5px;top:0">Select Color</span></div>
  <svg width="0" height="0" style="position:absolute"><filter id="gam" color-interpolation-filters="sRGB"><feComponentTransfer><feFuncR type="gamma" exponent="0.8"/><feFuncG type="gamma" exponent="0.8"/><feFuncB type="gamma" exponent="0.8"/></feComponentTransfer></filter></svg>
  <span class="lbl lg" style="left:26.5px;top:42.5px;font-size:12.3px">Basic colors</span>
  <i class="sw" style="left:29px;top:69px;background:#000000"></i><i class="sw" style="left:29px;top:93px;background:#000092"></i><i class="sw" style="left:29px;top:117px;background:#0000ff"></i><i class="sw" style="left:29px;top:141px;background:#6a0000"></i><i class="sw" style="left:29px;top:165px;background:#6a0092"></i><i class="sw" style="left:29px;top:189px;background:#6a00ff"></i><i class="sw" style="left:57px;top:69px;background:#b80000"></i><i class="sw" style="left:57px;top:93px;background:#b80092"></i><i class="sw" style="left:57px;top:117px;background:#b800ff"></i><i class="sw" style="left:57px;top:141px;background:#ff0000"></i><i class="sw" style="left:57px;top:165px;background:#ff0092"></i><i class="sw" style="left:57px;top:189px;background:#ff00ff"></i><i class="sw" style="left:85px;top:69px;background:#006a00"></i><i class="sw" style="left:85px;top:93px;background:#006a92"></i><i class="sw" style="left:85px;top:117px;background:#006aff"></i><i class="sw" style="left:85px;top:141px;background:#6a6a00"></i><i class="sw" style="left:85px;top:165px;background:#6a6a92"></i><i class="sw" style="left:85px;top:189px;background:#6a6aff"></i><i class="sw" style="left:113px;top:69px;background:#b86a00"></i><i class="sw" style="left:113px;top:93px;background:#b86a92"></i><i class="sw" style="left:113px;top:117px;background:#b86aff"></i><i class="sw" style="left:113px;top:141px;background:#ff6a00"></i><i class="sw" style="left:113px;top:165px;background:#ff6a92"></i><i class="sw" style="left:113px;top:189px;background:#ff6aff"></i><i class="sw" style="left:141px;top:69px;background:#00b800"></i><i class="sw" style="left:141px;top:93px;background:#00b892"></i><i class="sw" style="left:141px;top:117px;background:#00b8ff"></i><i class="sw" style="left:141px;top:141px;background:#6ab800"></i><i class="sw" style="left:141px;top:165px;background:#6ab892"></i><i class="sw" style="left:141px;top:189px;background:#6ab8ff"></i><i class="sw" style="left:169px;top:69px;background:#b8b800"></i><i class="sw" style="left:169px;top:93px;background:#b8b892"></i><i class="sw" style="left:169px;top:117px;background:#b8b8ff"></i><i class="sw" style="left:169px;top:141px;background:#ffb800"></i><i class="sw" style="left:169px;top:165px;background:#ffb892"></i><i class="sw" style="left:169px;top:189px;background:#ffb8ff"></i><i class="sw" style="left:197px;top:69px;background:#00ff00"></i><i class="sw" style="left:197px;top:93px;background:#00ff92"></i><i class="sw" style="left:197px;top:117px;background:#00ffff"></i><i class="sw" style="left:197px;top:141px;background:#6aff00"></i><i class="sw" style="left:197px;top:165px;background:#6aff92"></i><i class="sw" style="left:197px;top:189px;background:#6affff"></i><i class="sw" style="left:225px;top:69px;background:#b8ff00"></i><i class="sw" style="left:225px;top:93px;background:#b8ff92"></i><i class="sw" style="left:225px;top:117px;background:#b8ffff"></i><i class="sw" style="left:225px;top:141px;background:#ffff00"></i><i class="sw" style="left:225px;top:165px;background:#ffff92"></i><i class="sw" style="left:225px;top:189px;background:#ffffff"></i>
  <span class="lbl lg" style="left:26.5px;top:269.5px;font-size:12.3px">Custom colors</span>
  <i class="sw" style="left:29px;top:296px;background:#fff"></i><i class="sw" style="left:57px;top:296px;background:#fff"></i><i class="sw" style="left:85px;top:296px;background:#fff"></i><i class="sw" style="left:113px;top:296px;background:#fff"></i><i class="sw" style="left:141px;top:296px;background:#fff"></i><i class="sw" style="left:169px;top:296px;background:#fff"></i><i class="sw" style="left:197px;top:296px;background:#fff"></i><i class="sw" style="left:225px;top:296px;background:#fff"></i>
  <div class="abs" style="left:289px;top:42.5px;width:222px;height:201px;border:1px solid;border-color:#f7f7f7 #dadada #d4d4d4 #f4f4f4"><div style="width:220px;height:199px;filter:url(#gam);background:linear-gradient(to bottom,rgba(200,200,200,0),rgb(200,200,200)),linear-gradient(to right,rgb(205,16,0),rgb(200,0,200) 16.67%,rgb(0,0,200) 33.33%,rgb(0,200,200) 50%,rgb(0,200,0) 66.67%,rgb(200,200,0) 83.33%,rgb(205,16,0))"></div></div>
  <div class="abs" style="left:456px;top:194px;width:20px;height:2px;background:#000"></div>
  <div class="abs" style="left:465px;top:185px;width:2px;height:20px;background:#000"></div>
  <div class="abs" style="left:539.8px;top:45px;width:15px;height:195px;border:1px solid;border-color:#f7f7f7 #dadada #d4d4d4 #f7f7f7"><div style="width:13px;height:193px;filter:url(#gam);background:linear-gradient(to bottom,rgb(244,255,194),rgb(122,128,97) 50%,#000)"></div></div>
  <svg class="abs" style="left:555px;top:68px" width="6" height="11" viewBox="0 0 6 11"><path d="M6 0 V11 L0 5.5Z" fill="#000"/></svg>
  <div class="abs" style="left:282px;top:266px;width:59px;height:60px;background:#d5dfb0;border:1px solid;border-color:#a5a5a5 #dedede #dedede #a5a5a5"></div>
  <span class="lbl lg" style="left:358px;top:271px">Hue:</span>
  <div class="spin lg" style="left:396px;top:267px">71</div>
  <i class="step" style="left:438.5px;top:267px"></i>
  <span class="lbl lg" style="left:476px;top:271px">Red:</span>
  <div class="spin lg" style="left:513px;top:267px">208</div>
  <i class="step" style="left:555.5px;top:267px"></i>
  <span class="lbl lg" style="left:358px;top:303px">Sat:</span>
  <div class="spin lg" style="left:396px;top:301px">61</div>
  <i class="step" style="left:438.5px;top:301px"></i>
  <span class="lbl lg" style="left:461px;top:303px">Green:</span>
  <div class="spin lg" style="left:513px;top:301px">218</div>
  <i class="step" style="left:555.5px;top:301px"></i>
</div>
</body>
</html>
